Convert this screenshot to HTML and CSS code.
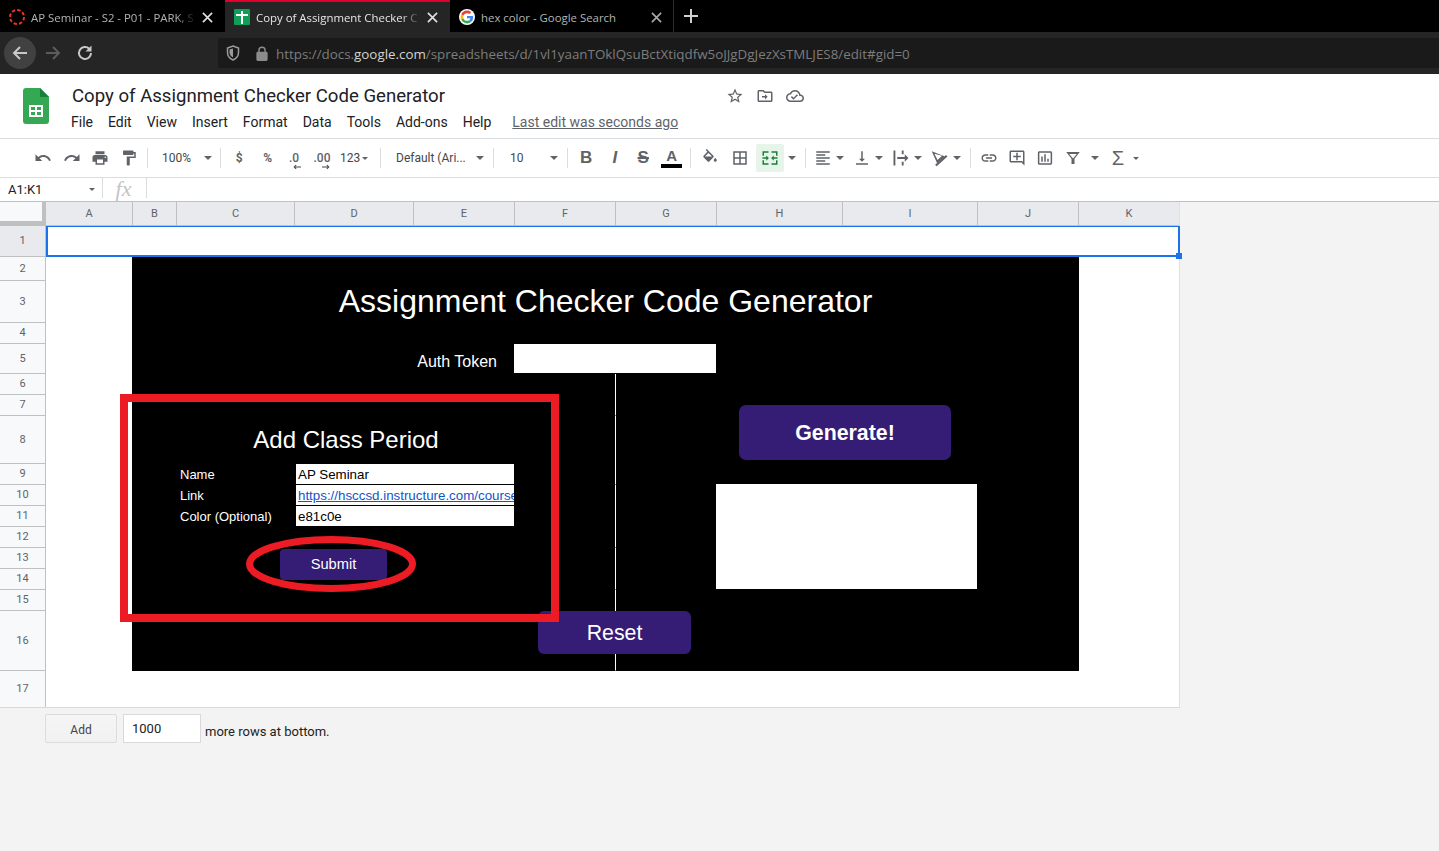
FILE: index.html
```html
<!DOCTYPE html>
<html lang="en">
<head>
    <meta charset="UTF-8">
    <meta name="viewport" content="width=device-width, initial-scale=1.0">
    <title>Copy of Assignment Checker Code Generator</title>
    <link rel="stylesheet" href="styles.css">
</head>
<body>

    <!-- browser tabs -->
    <div class="tabbar">
        <div class="tab">
            <svg class="favicon" viewBox="0 0 16 16"><circle cx="8" cy="8" r="7" fill="none" stroke="#e8351f" stroke-width="2" stroke-dasharray="3.4 2.100"/></svg>
            <span class="tab-title">AP Seminar - S2 - P01 - PARK, S</span>
            <svg class="tab-close" viewBox="0 0 12 12"><path d="M1 1l10 10M11 1L1 11"/></svg>
        </div>
        <div class="tab tab-active">
            <svg class="favicon" viewBox="0 0 16 16"><rect width="16" height="16" rx="1" fill="#0f9d58"/><path d="M7 2h2v3h5v2H9v8H7V7H2V5h5z" fill="#fff"/></svg>
            <span class="tab-title">Copy of Assignment Checker C</span>
            <svg class="tab-close" viewBox="0 0 12 12"><path d="M1 1l10 10M11 1L1 11"/></svg>
        </div>
        <div class="tab tab-last">
            <svg class="favicon" viewBox="-6 -6 60 60">
                <circle cx="24" cy="24" r="30" fill="#fff"/>
                <path fill="#EA4335" d="M24 9.5c3.54 0 6.71 1.22 9.21 3.6l6.85-6.85C35.9 2.38 30.47 0 24 0 14.62 0 6.51 5.38 2.56 13.22l7.98 6.19C12.43 13.72 17.74 9.5 24 9.5z"/>
                <path fill="#4285F4" d="M46.98 24.55c0-1.57-.15-3.09-.38-4.55H24v9.02h12.94c-.58 2.96-2.26 5.48-4.78 7.18l7.73 6c4.51-4.18 7.09-10.36 7.09-17.65z"/>
                <path fill="#FBBC05" d="M10.53 28.59c-.48-1.45-.76-2.99-.76-4.59s.27-3.14.76-4.59l-7.98-6.19C.92 16.46 0 20.12 0 24c0 3.88.92 7.54 2.56 10.78l7.97-6.19z"/>
                <path fill="#34A853" d="M24 48c6.48 0 11.93-2.13 15.89-5.81l-7.73-6c-2.15 1.45-4.92 2.3-8.16 2.3-6.26 0-11.57-4.22-13.47-9.91l-7.98 6.19C6.51 42.62 14.62 48 24 48z"/>
            </svg>
            <span class="tab-title tab-title-full">hex color - Google Search</span>
            <svg class="tab-close tab-close-dim" viewBox="0 0 12 12"><path d="M1 1l10 10M11 1L1 11"/></svg>
        </div>
        <svg class="new-tab" viewBox="0 0 14 14"><path d="M7 0v14M0 7h14"/></svg>
    </div>

    <!-- browser address bar -->
    <div class="navbar">
        <div class="nav-btn nav-back">
            <svg viewBox="0 0 18 18"><path d="M16 9H3M9 3L3 9l6 6"/></svg>
        </div>
        <div class="nav-btn nav-forward">
            <svg viewBox="0 0 18 18"><path d="M2 9h13M9 3l6 6-6 6"/></svg>
        </div>
        <div class="nav-btn nav-reload">
            <svg viewBox="0 0 18 18"><path d="M15 9a6 6 0 1 1-1.800-4.300"/><path class="solid" d="M15.500 1.500v6h-6z"/></svg>
        </div>
        <div class="urlbox">
            <svg class="url-shield" viewBox="0 0 14 16"><path d="M7 1l5.500 2v4.500C12.500 11 10 13.800 7 15 4 13.800 1.500 11 1.500 7.500V3z"/><path class="solid" d="M7 3.500v9C5 11.500 3.500 9.800 3.500 7.500V4.600z"/></svg>
            <svg class="url-lock" viewBox="0 0 12 16"><path d="M10.500 6H10V4.500a4 4 0 0 0-8 0V6h-.5C.7 6 0 6.700 0 7.500v7c0 .8.7 1.500 1.500 1.500h9c.8 0 1.500-.7 1.500-1.500v-7c0-.8-.7-1.500-1.500-1.500zM3.500 6V4.500a2.500 2.500 0 0 1 5 0V6z"/></svg>
            <span class="url-text">https://docs.<b>google.com</b>/spreadsheets/d/1vl1yaanTOklQsuBctXtiqdfw5oJJgDgJezXsTMLJES8/edit#gid=0</span>
        </div>
    </div>

    <!-- docs title + menu -->
    <div class="docs-header">
        <svg class="sheets-logo" viewBox="0 0 26 36">
            <path fill="#34a853" d="M3 0h14l9 9v24a3 3 0 0 1-3 3H3a3 3 0 0 1-3-3V3a3 3 0 0 1 3-3z"/>
            <path fill="#188038" d="M17 0l9 9h-9z"/>
            <path fill="#fff" d="M6 17h14v12H6zm2 2v3h4v-3zm6 0v3h4v-3zm-6 5v3h4v-3zm6 0v3h4v-3z" fill-rule="evenodd"/>
        </svg>
        <div class="docs-info">
            <div class="title-row">
                <div class="doc-title">Copy of Assignment Checker Code Generator</div>
                <svg class="title-icon" viewBox="0 0 24 24"><path d="M22 9.240l-7.190-.62L12 2 9.190 8.630 2 9.240l5.460 4.730L5.820 21 12 17.270 18.180 21l-1.630-7.030L22 9.240zM12 15.400l-3.760 2.270 1-4.280-3.320-2.880 4.380-.38L12 6.100l1.710 4.040 4.380.38-3.320 2.880 1 4.280L12 15.400z"/></svg>
                <svg class="title-icon" viewBox="0 0 24 24"><path d="M20 6h-8l-2-2H4c-1.100 0-2 .9-2 2v12c0 1.100.9 2 2 2h16c1.100 0 2-.9 2-2V8c0-1.100-.9-2-2-2zm0 12H4V6h5.170l2 2H20v10zM12 9.500l3.500 3.500-3.500 3.500V14H8v-2h4z"/></svg>
                <svg class="title-icon" viewBox="0 0 24 24"><path d="M19.350 10.040C18.670 6.590 15.640 4 12 4 9.110 4 6.600 5.640 5.350 8.040 2.340 8.360 0 10.910 0 14c0 3.310 2.690 6 6 6h13c2.760 0 5-2.240 5-5 0-2.640-2.050-4.780-4.650-4.960zM19 18H6c-2.210 0-4-1.790-4-4 0-2.050 1.530-3.760 3.560-3.970l1.070-.11.5-.95C8.080 7.140 9.940 6 12 6c2.620 0 4.880 1.860 5.390 4.430l.3 1.500 1.530.11c1.560.1 2.780 1.410 2.780 2.960 0 1.650-1.350 3-3 3zm-9-3.820l-2.090-2.090L6.500 13.500 10 17l6.010-6.010-1.410-1.410z"/></svg>
            </div>
            <div class="menu-row">
                <span>File</span><span>Edit</span><span>View</span><span>Insert</span><span>Format</span><span>Data</span><span>Tools</span><span>Add-ons</span><span>Help</span>
                <span class="last-edit">Last edit was seconds ago</span>
            </div>
        </div>
    </div>

    <!-- toolbar -->
    <div class="toolbar">
        <div class="tb-btn"><svg viewBox="0 0 24 24"><path d="M12.500 8c-2.650 0-5.050.99-6.900 2.600L2 7v9h9l-3.620-3.620c1.390-1.160 3.160-1.880 5.120-1.880 3.540 0 6.550 2.310 7.600 5.500l2.370-.78C21.080 11.030 17.150 8 12.500 8z"/></svg></div>
        <div class="tb-btn"><svg viewBox="0 0 24 24"><path d="M18.400 10.600C16.550 8.990 14.150 8 11.500 8c-4.650 0-8.580 3.030-9.960 7.220L3.900 16c1.050-3.190 4.050-5.500 7.600-5.500 1.950 0 3.730.72 5.120 1.880L13 16h9V7l-3.600 3.600z"/></svg></div>
        <div class="tb-btn"><svg viewBox="0 0 24 24"><path d="M19 8H5c-1.660 0-3 1.340-3 3v6h4v4h12v-4h4v-6c0-1.660-1.340-3-3-3zm-3 11H8v-5h8v5zm3-7c-.55 0-1-.45-1-1s.45-1 1-1 1 .45 1 1-.45 1-1 1zm-1-9H6v4h12V3z"/></svg></div>
        <div class="tb-btn"><svg viewBox="0 0 24 24"><path d="M18 4V3c0-.55-.45-1-1-1H5c-.55 0-1 .45-1 1v4c0 .55.45 1 1 1h12c.55 0 1-.45 1-1V6h1v4H9v11c0 .55.45 1 1 1h2c.55 0 1-.45 1-1v-9h8V4h-3z"/></svg></div>
        <div class="tb-sep"></div>
        <div class="tb-select tb-zoom"><span>100%</span><i class="caret"></i></div>
        <div class="tb-sep"></div>
        <div class="tb-btn tb-text tb-strong">$</div>
        <div class="tb-btn tb-text tb-strong">%</div>
        <div class="tb-btn tb-dec tb-dec-less"><span>.0</span><svg viewBox="0 0 10 6"><path d="M10 3H2M4 .5L1.500 3 4 5.500"/></svg></div>
        <div class="tb-btn tb-dec tb-dec-more"><span>.00</span><svg viewBox="0 0 10 6"><path d="M0 3h8M6 .5L8.500 3 6 5.500"/></svg></div>
        <div class="tb-format"><span>123</span><i class="caret caret-small"></i></div>
        <div class="tb-sep"></div>
        <div class="tb-select tb-font"><span>Default (Ari...</span><i class="caret"></i></div>
        <div class="tb-sep"></div>
        <div class="tb-select tb-size"><span>10</span><i class="caret"></i></div>
        <div class="tb-sep"></div>
        <div class="tb-btn tb-glyph tb-bold">B</div>
        <div class="tb-btn tb-glyph tb-italic">I</div>
        <div class="tb-btn tb-glyph tb-strike">S</div>
        <div class="tb-btn tb-glyph tb-color"><span>A</span><i class="color-bar"></i></div>
        <div class="tb-sep"></div>
        <div class="tb-btn tb-wide"><svg viewBox="0 0 24 24"><path d="M16.560 8.940L7.620 0 6.210 1.410l2.380 2.380-5.150 5.150c-.59.59-.59 1.540 0 2.120l5.500 5.500c.29.29.68.44 1.060.44s.77-.15 1.060-.44l5.500-5.500c.59-.58.59-1.530 0-2.120zM5.210 10L10 5.210 14.790 10H5.210zM19 11.500s-2 2.170-2 3.500c0 1.100.9 2 2 2s2-.9 2-2c0-1.330-2-3.500-2-3.500z"/></svg></div>
        <div class="tb-btn tb-wide"><svg viewBox="0 0 24 24"><path d="M3 3v18h18V3H3zm8 16H5v-6h6v6zm0-8H5V5h6v6zm8 8h-6v-6h6v6zm0-8h-6V5h6v6z"/></svg></div>
        <div class="tb-btn tb-merge"><svg viewBox="0 0 24 24"><path d="M2 3h8v2H4v4H2zM14 3h8v6h-2V5h-6zM2 15h2v4h6v2H2zM20 15h2v6h-8v-2h6zM2 11h5V8.500l3.500 3.500L7 15.500V13H2zM22 11h-5V8.500L13.500 12l3.500 3.500V13h5z"/></svg></div>
        <div class="tb-caret"><i class="caret"></i></div>
        <div class="tb-sep"></div>
        <div class="tb-combo"><svg viewBox="0 0 24 24"><path d="M15 15H3v2h12v-2zm0-8H3v2h12V7zM3 13h18v-2H3v2zm0 8h18v-2H3v2zM3 3v2h18V3H3z"/></svg><i class="caret"></i></div>
        <div class="tb-combo"><svg viewBox="0 0 24 24"><path d="M16 13h-3V3h-2v10H8l4 4 4-4zM4 19v2h16v-2H4z"/></svg><i class="caret"></i></div>
        <div class="tb-combo"><svg viewBox="0 0 24 24"><path d="M2 2h2.500v20H2zM13 2h2.500v5H13zM13 17h2.500v5H13zM7 10.800h10V7l5 5-5 5v-3.800H7z"/></svg><i class="caret"></i></div>
        <div class="tb-combo"><svg viewBox="0 0 24 24"><path d="M1 3l17 6.500-10 9zM4.500 6.200l4.200 8.300 6-5.400zM20 8l2 2L7.500 23l-2-2z" fill-rule="evenodd"/></svg><i class="caret"></i></div>
        <div class="tb-sep"></div>
        <div class="tb-btn tb-tight"><svg viewBox="0 0 24 24"><path d="M3.900 12c0-1.710 1.390-3.100 3.100-3.100h4V7H7c-2.760 0-5 2.240-5 5s2.240 5 5 5h4v-1.900H7c-1.710 0-3.100-1.390-3.100-3.100zM8 13h8v-2H8v2zm9-6h-4v1.900h4c1.710 0 3.100 1.390 3.100 3.100s-1.390 3.100-3.100 3.100h-4V17h4c2.760 0 5-2.240 5-5s-2.240-5-5-5z"/></svg></div>
        <div class="tb-btn tb-tight"><svg viewBox="0 0 24 24"><path d="M21.990 4c0-1.100-.89-2-1.990-2H4c-1.100 0-2 .9-2 2v12c0 1.100.9 2 2 2h14l4 4-.01-18zM20 4v13.170L18.830 16H4V4h16zM11 5h2v4h4v2h-4v4h-2v-4H7V9h4z"/></svg></div>
        <div class="tb-btn tb-tight"><svg viewBox="0 0 24 24"><path d="M9 17H7v-7h2v7zm4 0h-2V7h2v10zm4 0h-2v-4h2v4zm2.500 2.100h-15V5h15v14.100zm0-16.100h-15c-1.100 0-2 .9-2 2v14c0 1.100.9 2 2 2h15c1.100 0 2-.9 2-2V5c0-1.100-.9-2-2-2z"/></svg></div>
        <div class="tb-btn tb-tight"><svg viewBox="0 0 24 24"><path d="M3 4h18l-7 9v7h-4v-7zM7 6.500l5 6 5-6z" fill-rule="evenodd"/></svg></div>
        <div class="tb-caret tb-caret-filter"><i class="caret"></i></div>
        <div class="tb-btn tb-glyph tb-sigma">&Sigma;</div>
        <div class="tb-caret tb-caret-sum"><i class="caret caret-small"></i></div>
    </div>

    <!-- formula bar -->
    <div class="formula-bar">
        <div class="name-box"><span>A1:K1</span><i class="caret caret-small"></i></div>
        <div class="fx">fx</div>
    </div>

    <!-- sheet grid -->
    <div class="sheet">
        <div class="corner"></div>
        <div class="col-head">A</div>
        <div class="col-head">B</div>
        <div class="col-head">C</div>
        <div class="col-head">D</div>
        <div class="col-head">E</div>
        <div class="col-head">F</div>
        <div class="col-head">G</div>
        <div class="col-head">H</div>
        <div class="col-head">I</div>
        <div class="col-head">J</div>
        <div class="col-head">K</div>

        <div class="row-head row-head-active">1</div>
        <div class="row-head">2</div>
        <div class="row-head">3</div>
        <div class="row-head">4</div>
        <div class="row-head">5</div>
        <div class="row-head">6</div>
        <div class="row-head">7</div>
        <div class="row-head">8</div>
        <div class="row-head">9</div>
        <div class="row-head">10</div>
        <div class="row-head">11</div>
        <div class="row-head">12</div>
        <div class="row-head">13</div>
        <div class="row-head">14</div>
        <div class="row-head">15</div>
        <div class="row-head">16</div>
        <div class="row-head">17</div>

        <div class="selection"><i class="sel-handle"></i></div>

        <!-- the merged black block, rows 2-16 -->
        <div class="panel">
            <h1 class="panel-title">Assignment Checker Code Generator</h1>

            <div class="auth-label">Auth Token</div>
            <div class="auth-input"></div>

            <div class="divider divider-1"></div>
            <div class="divider divider-2"></div>
            <div class="divider divider-3"></div>
            <div class="divider divider-4"></div>
            <div class="divider divider-5"></div>

            <h2 class="period-title">Add Class Period</h2>
            <div class="field-label row-name">Name</div>
            <div class="field-value row-name">AP Seminar</div>
            <div class="field-label row-link">Link</div>
            <div class="field-value row-link"><a href="#">https://hsccsd.instructure.com/course</a></div>
            <div class="field-label row-color">Color (Optional)</div>
            <div class="field-value row-color">e81c0e</div>

            <button class="btn btn-submit" type="button">Submit</button>
            <button class="btn btn-generate" type="button">Generate!</button>
            <div class="output-box"></div>
            <button class="btn btn-reset" type="button">Reset</button>
        </div>

        <!-- annotations drawn on top of the screenshot -->
        <div class="red-box"></div>
        <svg class="red-ring" viewBox="0 0 170 56"><ellipse cx="85" cy="28" rx="81.500" ry="24.500"/></svg>
    </div>

    <div class="add-rows">
        <button class="add-btn" type="button">Add</button>
        <div class="add-input">1000</div>
        <span class="add-text">more rows at bottom.</span>
    </div>

</body>
</html>
```

FILE: styles.css
```css
body {
    margin: 0;
    height: 851px;
    overflow: hidden;
    display: flex;
    flex-direction: column;
    background-color: #f3f3f3;
    font-family: Roboto, Arial, sans-serif;
}

svg {
    display: block;
    flex: none;
}

/* browser tabs */
.tabbar {
    height: 32px;
    display: flex;
    align-items: stretch;
    background-color: #000;
    font-family: "Open Sans", sans-serif;
    color: #b4b4b4;
}

.tab {
    width: 225px;
    box-sizing: border-box;
    padding: 2px 12px 0 9px;
    display: flex;
    align-items: center;
    gap: 6px;
}

.tab-last {
    width: 224px;
    padding-right: 11px;
    border-right: 1px solid #2c2c2c;
}

.tab-active {
    background-color: #252525;
    border-top: 2px solid #e2002a;
    color: #e6e6e6;
    padding-top: 0;
}

.favicon {
    width: 16px;
    height: 16px;
}

.tab-title {
    flex: 1;
    min-width: 0;
    font-size: 11.400px;
    white-space: nowrap;
    -webkit-mask-image: linear-gradient(to right, #000 88%, transparent 100%);
    mask-image: linear-gradient(to right, #000 88%, transparent 100%);
}

.tab-title-full {
    -webkit-mask-image: none;
    mask-image: none;
}

.tab-close {
    width: 11px;
    height: 11px;
    fill: none;
    stroke: #e0e0e0;
    stroke-width: 1.800;
}

.tab-close-dim {
    stroke: #a8a8a8;
}

.new-tab {
    width: 14px;
    height: 14px;
    margin: 9px 0 0 10px;
    fill: none;
    stroke: #d0d0d0;
    stroke-width: 2;
}

/* browser address bar */
.navbar {
    height: 42px;
    box-sizing: border-box;
    padding-left: 4px;
    display: flex;
    align-items: center;
    background-color: #252525;
}

.nav-btn {
    width: 32px;
    height: 32px;
    display: flex;
    align-items: center;
    justify-content: center;
}

.nav-btn svg {
    width: 18px;
    height: 18px;
    fill: none;
    stroke: #c8c8c8;
    stroke-width: 2;
}

.nav-btn .solid {
    fill: #c8c8c8;
    stroke: none;
}

.nav-back {
    border-radius: 50%;
    background-color: #414141;
}

.nav-forward {
    margin-left: 1px;
}

.nav-forward svg {
    stroke: #5c5c5c;
}

.urlbox {
    flex: 1;
    height: 30px;
    margin-left: 117px;
    padding-left: 8px;
    display: flex;
    align-items: center;
    background-color: #1a1a1a;
    border-radius: 3px 0 0 3px;
}

.url-shield {
    width: 14px;
    height: 16px;
    fill: none;
    stroke: #9a9a9a;
    stroke-width: 1.500;
}

.url-shield .solid {
    fill: #9a9a9a;
    stroke: none;
}

.url-lock {
    width: 12px;
    height: 15px;
    margin-left: 16px;
    fill: #8c8c8c;
    fill-rule: evenodd;
}

.url-text {
    margin-left: 8px;
    padding-top: 1px;
    font-family: "Open Sans", sans-serif;
    font-size: 13.370px;
    color: #7d7d7d;
    white-space: nowrap;
}

.url-text b {
    font-weight: 400;
    color: #d4d4d4;
}

/* docs header */
.docs-header {
    height: 65px;
    box-sizing: border-box;
    padding: 14px 0 0 23px;
    display: flex;
    background-color: #fff;
    border-bottom: 1px solid #dadce0;
}

.sheets-logo {
    width: 26px;
    height: 36px;
}

.docs-info {
    margin: -1px 0 0 23px;
}

.title-row {
    height: 18px;
    display: flex;
    align-items: center;
    gap: 12px;
}

.doc-title {
    width: 642px;
    font-size: 18.600px;
    color: #202124;
    white-space: nowrap;
}

.title-icon {
    width: 18px;
    height: 18px;
    fill: #5f6368;
}

.menu-row {
    margin: 8px 0 0 -1px;
    display: flex;
    gap: 15px;
    font-size: 14px;
    line-height: 18px;
    color: #202124;
    white-space: nowrap;
}

.menu-row .last-edit {
    margin-left: 6px;
    color: #5f6368;
    text-decoration: underline;
}

/* toolbar */
.toolbar {
    height: 39px;
    box-sizing: border-box;
    padding-left: 29px;
    display: flex;
    align-items: center;
    background-color: #fff;
    border-bottom: 1px solid #dadce0;
    font-size: 12px;
    color: #444746;
    white-space: nowrap;
}

.tb-btn {
    width: 28.500px;
    height: 28px;
    flex: none;
    display: flex;
    align-items: center;
    justify-content: center;
}

.tb-btn svg,
.tb-combo svg {
    width: 18px;
    height: 18px;
    fill: #5f6368;
}

.tb-tight {
    width: 28px;
}

.tb-sep {
    width: 1px;
    height: 20px;
    margin: 0 4px;
    flex: none;
    background-color: #dadce0;
}

.caret {
    display: block;
    width: 0;
    height: 0;
    flex: none;
    border-left: 4px solid transparent;
    border-right: 4px solid transparent;
    border-top: 4px solid #5f6368;
}

.caret-small {
    border-left-width: 3px;
    border-right-width: 3px;
    border-top-width: 3px;
}

.tb-select {
    height: 28px;
    box-sizing: border-box;
    flex: none;
    display: flex;
    align-items: center;
    justify-content: space-between;
}

.tb-zoom {
    width: 64px;
    padding: 0 4px 0 10px;
}

.tb-font {
    width: 104px;
    padding: 0 5px 0 11px;
}

.tb-size {
    width: 65px;
    padding: 0 5px 0 12px;
}

.tb-text {
    font-size: 12px;
}

.tb-strong {
    font-weight: 700;
    color: #5f6368;
}

.tb-dec {
    position: relative;
    font-weight: 500;
    color: #5f6368;
}

.tb-dec svg {
    position: absolute;
    bottom: 2px;
    width: 8px;
    height: 6px;
    fill: none;
    stroke: #444;
    stroke-width: 1.300;
}

.tb-dec-less {
    width: 24px;
}

.tb-dec-more {
    width: 32px;
}

.tb-dec-less svg {
    left: 11px;
}

.tb-dec-more svg {
    left: 16px;
}

.tb-format {
    width: 38px;
    flex: none;
    padding-left: 2px;
    box-sizing: border-box;
    display: flex;
    align-items: center;
    gap: 2px;
}

.tb-glyph {
    color: #5f6368;
}

.tb-bold {
    font: 700 17px "Liberation Sans", sans-serif;
}

.tb-italic {
    font: italic 700 17px "Liberation Sans", sans-serif;
}

.tb-strike {
    font: 700 17px "Liberation Sans", sans-serif;
    text-decoration: line-through;
    text-decoration-thickness: 2px;
}

.tb-color {
    flex-direction: column;
    font: 700 15px "Liberation Sans", sans-serif;
    line-height: 15px;
}

.color-bar {
    display: block;
    width: 21px;
    height: 4px;
    margin-top: 1px;
    background-color: #000;
}

.tb-wide {
    width: 30px;
}

.tb-merge {
    width: 28px;
    margin-left: 1px;
    border-radius: 2px;
    background-color: #e6f4ea;
}

.tb-merge svg {
    fill: #188038;
}

.tb-caret {
    width: 17px;
    height: 28px;
    flex: none;
    padding-right: 1px;
    box-sizing: border-box;
    display: flex;
    align-items: center;
    justify-content: center;
}

.tb-combo {
    width: 39px;
    flex: none;
    padding-left: 4px;
    box-sizing: border-box;
    display: flex;
    align-items: center;
    gap: 4px;
}

.tb-caret-filter {
    width: 16px;
}

.tb-sigma {
    width: 30px;
    font: 400 20px "Liberation Sans", sans-serif;
}

.tb-caret-sum {
    width: 6px;
    padding: 0;
}

/* formula bar */
.formula-bar {
    height: 24px;
    box-sizing: border-box;
    display: flex;
    background-color: #fff;
    border-bottom: 1px solid #c0c0c0;
}

.name-box {
    width: 103px;
    box-sizing: border-box;
    margin-bottom: 3px;
    padding: 2px 7px 0 8px;
    display: flex;
    align-items: center;
    justify-content: space-between;
    border-right: 1px solid #dadce0;
    font-size: 13px;
    color: #202124;
}

.fx {
    width: 44px;
    box-sizing: border-box;
    margin-bottom: 3px;
    padding-right: 2px;
    text-align: center;
    border-right: 1px solid #dadce0;
    font: italic 22px/21px "Liberation Serif", serif;
    color: #c4c4c4;
}

/* sheet grid */
.sheet {
    position: relative;
    width: 1180px;
    display: grid;
    grid-template-columns: 46px 87px 44px 118px 119px 101px 101px 101px 126px 135px 101px 101px;
    grid-template-rows: 24px 31px 24px 42px 21px 30px 21px 21px 48px repeat(7, 21px) 60px 37px;
    background-color: #fff;
}

.sheet::after {
    content: "";
    position: absolute;
    inset: 0;
    border-right: 1px solid #e0e0e0;
    border-bottom: 1px solid #d9d9d9;
    pointer-events: none;
}

.corner {
    background-color: #f8f9fa;
    border-right: 4px solid #c0c0c0;
    border-bottom: 5px solid #c0c0c0;
}

.col-head {
    box-sizing: border-box;
    display: flex;
    align-items: center;
    justify-content: center;
    background-color: #e8eaed;
    border-right: 1px solid #c0c0c0;
    border-bottom: 1px solid #c0c0c0;
    font-size: 11px;
    color: #5f6368;
}

.row-head {
    grid-column: 1;
    box-sizing: border-box;
    padding-bottom: 1px;
    display: flex;
    align-items: center;
    justify-content: center;
    background-color: #f8f9fa;
    border-right: 1px solid #c0c0c0;
    border-bottom: 1px solid #c0c0c0;
    font-size: 11px;
    color: #5f6368;
}

.row-head-active {
    background-color: #e8eaed;
}

.selection {
    grid-column: 2 / 13;
    grid-row: 2;
    position: relative;
    z-index: 1;
    border: 2px solid #1a73e8;
    border-top-width: 1px;
    border-left-width: 2px;
}

.sel-handle {
    position: absolute;
    right: -4px;
    bottom: -4px;
    width: 6px;
    height: 6px;
    background-color: #1a73e8;
}

/* merged block */
.panel {
    grid-column: 3 / 12;
    grid-row: 3 / 18;
    margin-left: -1px;
    display: grid;
    grid-template-columns: 45px 118px 119px 101px 101px 101px 126px 135px 101px;
    grid-template-rows: 24px 42px 21px 30px 21px 21px 48px repeat(7, 21px) 60px;
    background-color: #000;
    font-family: "Liberation Sans", Arial, sans-serif;
    color: #fff;
}

.panel-title {
    grid-column: 1 / 10;
    grid-row: 2;
    margin: 0 0 2px;
    align-self: center;
    text-align: center;
    font-size: 32px;
    font-weight: 400;
}

.auth-label {
    grid-column: 4;
    grid-row: 4;
    padding-right: 18px;
    align-self: end;
    text-align: right;
    font-size: 16px;
    line-height: 25px;
}

.auth-input {
    grid-column: 5 / 7;
    grid-row: 4;
    margin: 0 1px 1px -1px;
    background-color: #fff;
}

.divider {
    grid-column: 5;
    border-right: 1px solid #fff;
    border-bottom: 1px solid #000;
}

.divider-1 { grid-row: 5 / 7; }
.divider-2 { grid-row: 7 / 9; }
.divider-3 { grid-row: 9 / 12; }
.divider-4 { grid-row: 12 / 14; }
.divider-5 { grid-row: 14 / 16; }

.period-title {
    grid-column: 2 / 5;
    grid-row: 7;
    margin: 0;
    align-self: center;
    text-align: center;
    font-size: 24px;
    font-weight: 400;
}

.field-label {
    grid-column: 2;
    padding: 1px 0 0 3px;
    font-size: 13px;
    line-height: 20px;
    white-space: nowrap;
}

.field-value {
    grid-column: 3 / 5;
    margin: 0 1px 1px 1px;
    padding: 1px 0 0 2px;
    overflow: hidden;
    background-color: #fff;
    color: #000;
    font-size: 13.330px;
    line-height: 19px;
    white-space: nowrap;
}

.field-value a {
    color: #1155cc;
}

.row-name { grid-row: 8; }
.row-link { grid-row: 9; }
.row-color { grid-row: 10; }

.btn {
    border: 0;
    padding: 0;
    background-color: #351c75;
    color: #fff;
    font-family: "Liberation Sans", Arial, sans-serif;
}

.btn-submit {
    grid-column: 2 / 4;
    grid-row: 12 / 14;
    margin: 1px 27px 10px 103px;
    padding-bottom: 2px;
    border-radius: 4px;
    font-size: 14.670px;
}

.btn-generate {
    grid-column: 7 / 9;
    grid-row: 6 / 8;
    margin: 10px 27px 4px 22px;
    padding-top: 2px;
    border-radius: 7px;
    font-size: 21.330px;
    font-weight: 700;
}

.btn-reset {
    grid-column: 4 / 7;
    grid-row: 15;
    margin: 0 26px 17px 124px;
    padding-top: 2px;
    border-radius: 6px;
    font-size: 21.330px;
}

.output-box {
    grid-column: 7 / 9;
    grid-row: 9 / 14;
    margin: -1px 1px 1px -1px;
    background-color: #fff;
}

/* annotations */
.red-box {
    position: absolute;
    left: 120px;
    top: 192px;
    width: 439px;
    height: 228px;
    box-sizing: border-box;
    border: 8px solid #ed1c24;
}

.red-ring {
    position: absolute;
    left: 246px;
    top: 334px;
    width: 170px;
    height: 56px;
    fill: none;
    stroke: #ed1c24;
    stroke-width: 7;
}

/* footer */
.add-rows {
    padding: 6px 0 0 45px;
    display: flex;
    align-items: flex-start;
}

.add-btn {
    width: 72px;
    height: 29px;
    padding: 2px 0 0;
    border: 1px solid #dcdcdc;
    border-radius: 2px;
    background: linear-gradient(#f5f5f5, #f1f1f1);
    font-family: Roboto, Arial, sans-serif;
    font-size: 12px;
    color: #444;
}

.add-input {
    width: 78px;
    height: 29px;
    box-sizing: border-box;
    margin-left: 6px;
    padding-left: 8px;
    border: 1px solid #d9d9d9;
    background-color: #fff;
    font-size: 13px;
    line-height: 28px;
    color: #222;
}

.add-text {
    margin: 10px 0 0 4px;
    font-size: 13px;
    color: #222;
}
```
